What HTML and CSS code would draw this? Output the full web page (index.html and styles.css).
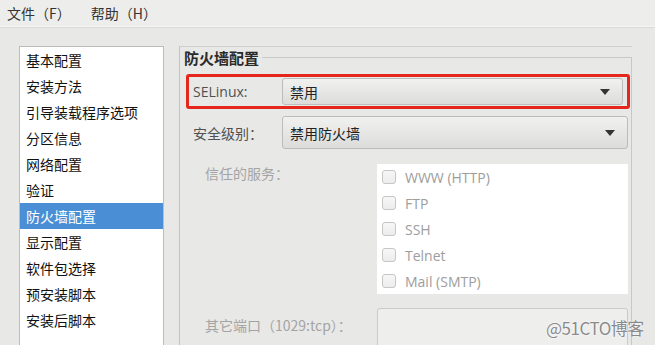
FILE: index.html
```html
<!DOCTYPE html>
<html lang="zh-CN">
<head>
<meta charset="utf-8">
<link rel="stylesheet" href="styles.css">
</head>
<body>
<div class="menubar">
  <span class="menu">文件（F）</span>
  <span class="menu">帮助（H）</span>
</div>
<div class="main">
  <ul class="nav">
    <li>基本配置</li>
    <li>安装方法</li>
    <li>引导装载程序选项</li>
    <li>分区信息</li>
    <li>网络配置</li>
    <li>验证</li>
    <li class="sel">防火墙配置</li>
    <li>显示配置</li>
    <li>软件包选择</li>
    <li>预安装脚本</li>
    <li>安装后脚本</li>
  </ul>
  <div class="panel">
    <div class="panel-head">
      <span class="panel-title">防火墙配置</span>
      <span class="rule"></span>
    </div>
    <div class="panel-body">
      <div class="row hl">
        <span class="lbl">SELinux:</span>
        <div class="combo"><span>禁用</span><span class="arrow"></span></div>
      </div>
      <div class="row plain">
        <span class="lbl">安全级别：</span>
        <div class="combo tall"><span>禁用防火墙</span><span class="arrow"></span></div>
      </div>
      <div class="row dim">
        <span class="lbl2">信任的服务：</span>
        <div class="services">
          <div class="svc"><span class="cb"></span>WWW (HTTP)</div>
          <div class="svc"><span class="cb"></span>FTP</div>
          <div class="svc"><span class="cb"></span>SSH</div>
          <div class="svc"><span class="cb"></span>Telnet</div>
          <div class="svc"><span class="cb"></span>Mail (SMTP)</div>
        </div>
      </div>
      <div class="row dim port">
        <span class="lbl2">其它端口（1029:tcp）：</span>
        <div class="entry"></div>
      </div>
    </div>
  </div>
</div>
<div class="watermark">@51CTO博客</div>
</body>
</html>
```

FILE: styles.css
```css
html, body {
  margin: 0;
  padding: 0;
  width: 655px;
  height: 345px;
  overflow: hidden;
  background: #e8e8e7;
  font-family: "Open Sans", "Noto Sans CJK SC", sans-serif;
  font-size: 14px;
  color: #2e3436;
}
.menubar {
  height: 26px;
  border-bottom: 1px solid #f6f6f5;
  background: #ededec;
  display: flex;
  align-items: center;
  padding-left: 7px;
  gap: 20px;
  box-shadow: 0 1px 0 #d9d9d8;
}
.menu {
  font-family: "Noto Sans CJK SC", sans-serif;
  font-size: 14px;
  color: #333;
  line-height: 26px;
}
.main {
  display: flex;
  padding: 19px 0 0 19px;
  gap: 15px;
  height: 299px;
  overflow: hidden;
}
.nav {
  list-style: none;
  margin: 0;
  padding: 0;
  width: 143px;
  height: 320px;
  background: #fff;
  border: 1px solid #bdbdbc;
  font-family: "Noto Sans CJK SC", sans-serif;
  font-size: 14px;
  color: #111;
}
.nav li {
  height: 26px;
  line-height: 26px;
  padding-left: 6px;
}
.nav li.sel {
  background: #4a8fd6;
  color: #fff;
}
.panel {
  width: 452px;
  border-top: 1px solid #cfcfce;
  border-left: 1px solid #c2c2c1;
  height: 320px;
}
.panel-head {
  display: flex;
  align-items: center;
  height: 21px;
}
.panel-title {
  font-family: "Noto Sans CJK SC", sans-serif;
  font-weight: bold;
  font-size: 15px;
  color: #2a2a2a;
  margin-left: 4px;
  margin-right: 3px;
  line-height: 20px;
}
.rule {
  flex: 1;
  align-self: stretch;
  margin-top: 10px;
  border-top: 1px solid #c8c8c7;
  border-right: 1px solid #c8c8c7;
}
.panel-body {
  border-right: 1px solid #c8c8c7;
  padding: 6px 0 0 6px;
  height: 300px;
}
.row {
  display: flex;
  align-items: center;
}
.hl {
  width: 434px;
  height: 29px;
  border: 3px solid #e5261c;
  border-radius: 3px;
  padding-left: 4px;
}
.plain {
  margin-top: 7px;
  padding-left: 7px;
}
.lbl {
  width: 89px;
  color: #505050;
  font-size: 14px;
}
.combo {
  display: flex;
  align-items: center;
  justify-content: space-between;
  width: 341px;
  height: 27px;
  border: 1px solid #bcbcba;
  border-radius: 3px;
  background: linear-gradient(#f1f1f0, #dcdcdb);
  padding: 0 12px 0 7px;
  box-sizing: border-box;
  font-family: "Noto Sans CJK SC", sans-serif;
  color: #222;
}
.combo.tall {
  width: 346px;
  height: 33px;
}
.arrow {
  width: 0;
  height: 0;
  border-left: 5px solid transparent;
  border-right: 5px solid transparent;
  border-top: 6px solid #333;
}
.dim {
  align-items: flex-start;
  padding-left: 19px;
  margin-top: 15px;
}
.lbl2 {
  width: 172px;
  color: #a4a4a4;
  font-family: "Noto Sans CJK SC", sans-serif;
  font-size: 14px;
  line-height: 16px;
  margin-top: 1px;
}
.services {
  width: 251px;
  height: 130px;
  background: #fff;
}
.svc {
  display: flex;
  align-items: center;
  height: 26px;
  padding-left: 5px;
  color: #9d9d9d;
  font-size: 14px;
}
.cb {
  width: 14px;
  height: 14px;
  border: 1px solid #c6c6c5;
  border-radius: 3px;
  background: linear-gradient(#f7f7f7, #ececec);
  margin-right: 9px;
  box-sizing: border-box;
}
.port {
  margin-top: 14px;
}
.port .lbl2 {
  margin-top: 9px;
}
.entry {
  width: 251px;
  height: 40px;
  border: 1px solid #cacac9;
  border-radius: 3px;
  background: #eeeeed;
  box-sizing: border-box;
}
.watermark {
  position: absolute;
  left: 546px;
  top: 315px;
  font-family: "Noto Sans CJK SC", sans-serif;
  font-size: 17px;
  color: #8a8a8a;
  text-shadow: 0 0 2px #fff, 0 0 1px #fff;
  letter-spacing: -0.5px;
}
```
